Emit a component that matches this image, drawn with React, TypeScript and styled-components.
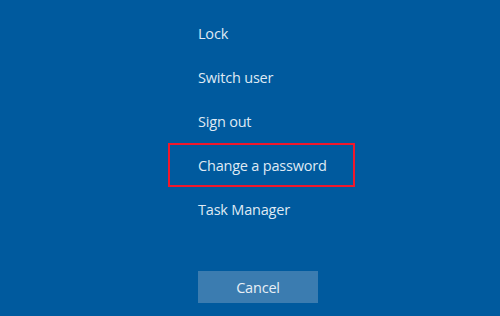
import React from "react";
import styled, { createGlobalStyle } from "styled-components";

const GlobalStyle = createGlobalStyle`
  html, body {
    margin: 0;
    padding: 0;
    background: #005a9e;
  }
`;

const Screen = styled.div`
  width: 500px;
  height: 316px;
  background: #005a9e;
  display: flex;
  flex-direction: column;
  padding: 11px 0 0 168px;
  box-sizing: border-box;
  font-family: "Segoe UI", "Open Sans", "Noto Sans", sans-serif;
  color: #dfe9f4;
  overflow: hidden;
`;

const Menu = styled.div`
  display: flex;
  flex-direction: column;
`;

const Item = styled.div<{ $focused?: boolean }>`
  width: 187px;
  height: 44px;
  box-sizing: border-box;
  display: flex;
  align-items: center;
  padding-left: 28px;
  font-size: 14.5px;
  letter-spacing: -0.2px;
  border: 2px solid ${(p) => (p.$focused ? "#f2172a" : "transparent")};
`;

const CancelButton = styled.button`
  margin: 40px 0 0 30px;
  width: 120px;
  height: 32px;
  border: none;
  background: #3b7cb0;
  color: #e8eff6;
  font-family: inherit;
  font-size: 14.5px;
  letter-spacing: -0.2px;
  padding: 0;
`;

const items = ["Lock", "Switch user", "Sign out", "Change a password", "Task Manager"];

export default function App() {
  return (
    <>
      <GlobalStyle />
      <Screen>
        <Menu>
          {items.map((label) => (
            <Item key={label} $focused={label === "Change a password"}>
              {label}
            </Item>
          ))}
        </Menu>
        <div>
          <CancelButton>Cancel</CancelButton>
        </div>
      </Screen>
    </>
  );
}
